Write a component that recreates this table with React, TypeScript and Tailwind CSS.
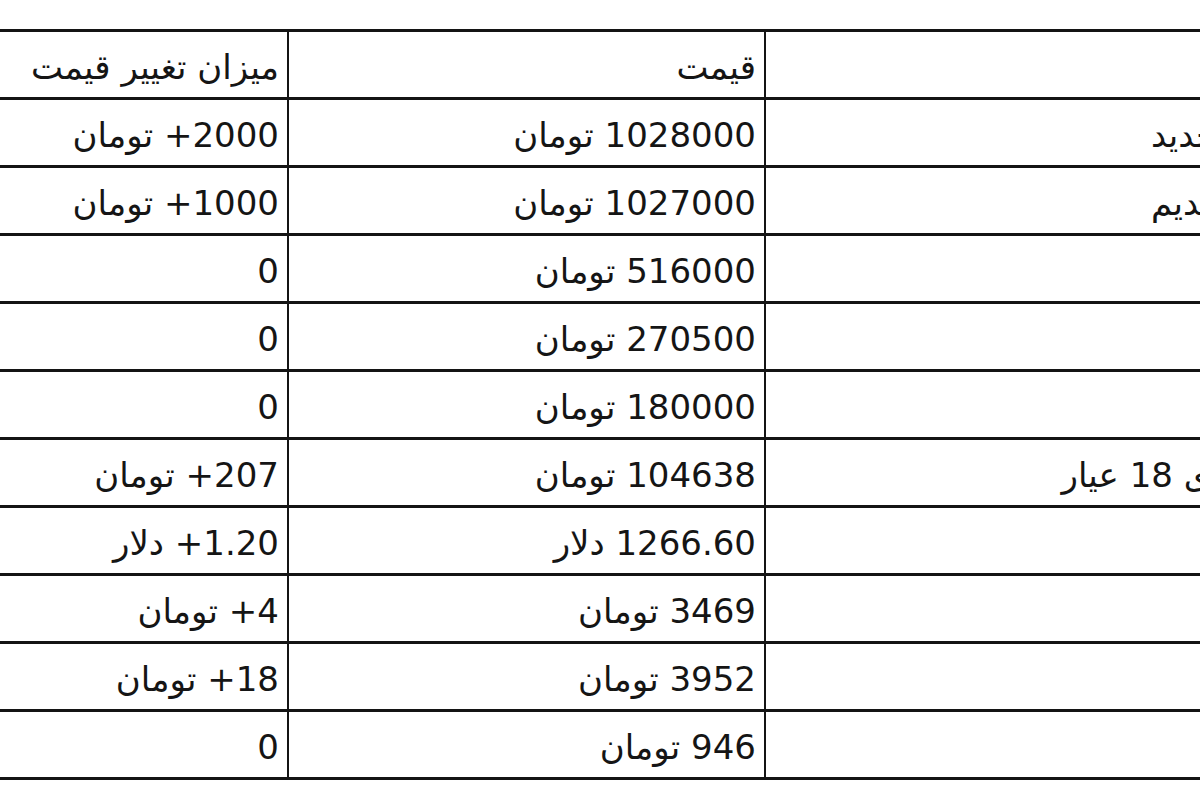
const rows: [string, string, string][] = [
  ['عنوان', 'قیمت', 'میزان تغییر قیمت'],
  ['سکه طرح جدید', '1028000 تومان', '2000+ تومان'],
  ['سکه طرح قدیم', '1027000 تومان', '1000+ تومان'],
  ['نیم سکه', '516000 تومان', '0'],
  ['ربع سکه', '270500 تومان', '0'],
  ['سکه گرمی', '180000 تومان', '0'],
  ['هر گرم طلای 18 عیار', '104638 تومان', '207+ تومان'],
  ['انس طلا', '1266.60 دلار', '1.20+ دلار'],
  ['دلار', '3469 تومان', '4+ تومان'],
  ['یورو', '3952 تومان', '18+ تومان'],
  ['درهم', '946 تومان', '0'],
];

function Cell({ text, divider }: { text: string; divider?: boolean }) {
  return (
    <div
      dir="rtl"
      className={
        'h-[68px] flex items-center pt-[6px] pr-[8px] whitespace-nowrap overflow-hidden border-b-[3px] border-[#141414] ' +
        (divider ? 'border-l-2' : '')
      }
    >
      {text}
    </div>
  );
}

export default function App() {
  return (
    <div className="w-[1200px] h-[800px] overflow-hidden bg-white">
      <div
        className="ml-[-4px] mt-[29px] w-[1384px] grid grid-cols-[291px_477px_616px] border-t-[3px] border-[#141414] text-[34px] text-[#151515]"
        style={{ fontFamily: '"DejaVu Sans", Tahoma, sans-serif' }}
      >
        {rows.map(([name, price, change], i) => (
          <div key={i} className="contents">
            <Cell text={change} />
            <Cell text={price} divider />
            <Cell text={name} divider />
          </div>
        ))}
      </div>
    </div>
  );
}
